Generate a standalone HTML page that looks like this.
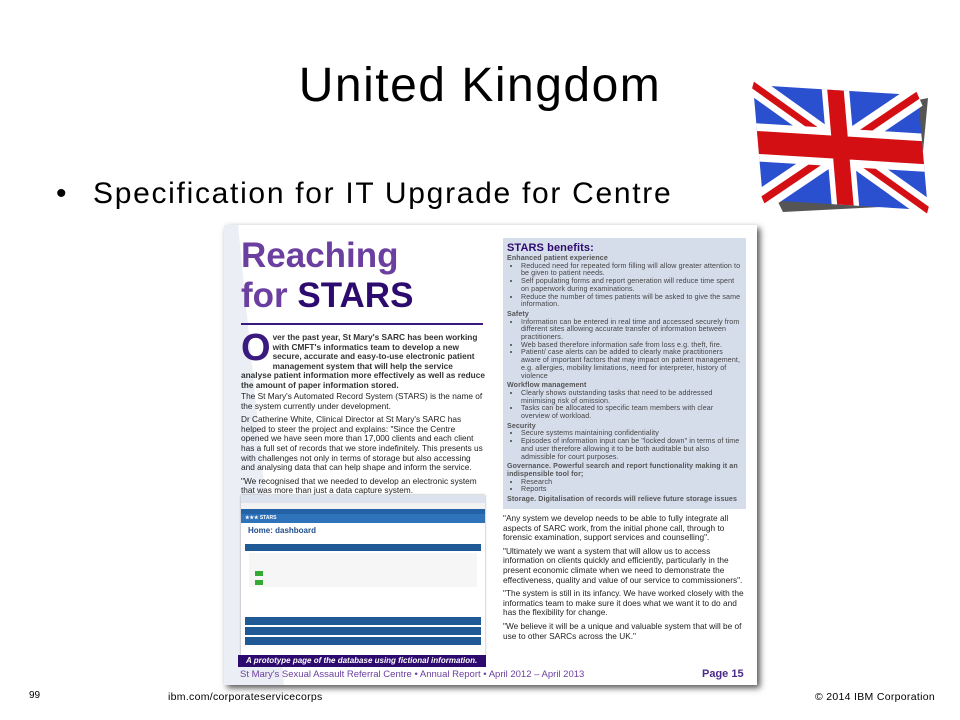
<!DOCTYPE html>
<html><head><meta charset="utf-8"><style>
body{margin:0;width:960px;height:720px;background:#fff;position:relative;overflow:hidden;font-family:"Liberation Sans",sans-serif}
.a{position:absolute}
.t{font-size:8.3px;line-height:9.6px;color:#333;font-weight:bold}
.r{font-size:7.1px;line-height:7.7px;color:#444;letter-spacing:0.1px}
.r ul{margin:0;padding-left:14px}
.r b{color:#555}
</style></head><body>
<div class="a" style="left:0;top:58px;width:960px;text-align:center;font-size:48px;letter-spacing:1.5px;color:#000">United Kingdom</div>
<div class="a" style="left:56px;top:177px;font-size:30px;color:#000">•</div>
<div class="a" style="left:93px;top:177px;font-size:30px;color:#000;letter-spacing:1.7px">Specification for IT Upgrade for Centre</div>

<svg class="a" style="left:0;top:0" width="960" height="230">
<polygon points="918,100 928,98 918,205 783,212 778,202" fill="#555"/>
<g transform="matrix(2.75,0.17,0.33,3.83,753,85)">
<rect width="60" height="30" fill="#2a4fcf"/>
<path d="M0,0L60,30M60,0L0,30" stroke="#fff" stroke-width="6"/>
<path d="M0,0L60,30M60,0L0,30" stroke="#d40f14" stroke-width="2"/>
<path d="M30,0V30M0,15H60" stroke="#fff" stroke-width="10"/>
<path d="M30,0V30M0,15H60" stroke="#d40f14" stroke-width="6"/>
</g>
</svg>

<div class="a" style="left:224px;top:225px;width:533px;height:460px;background:#fff;box-shadow:3px 3px 6px #555"></div>
<svg class="a" style="left:224px;top:225px" width="60" height="460"><polygon points="0,0 14,0 60,460 0,460" fill="#eceef6"/></svg>
<div class="a" style="left:241px;top:236px;font-size:35px;line-height:40px;font-weight:bold;color:#6b3fa0">Reaching<br>for <span style="color:#2d0a6e">STARS</span></div>
<div class="a" style="left:241px;top:323px;width:242px;height:2px;background:#3b1a80"></div>
<div class="a t" style="left:241px;top:333px;width:244px"><span style="float:left;font-size:38px;line-height:30px;color:#3b1a80;margin-right:2px">O</span>ver the past year, St Mary's SARC has been working with CMFT's informatics team to develop a new secure, accurate and easy-to-use electronic patient management system that will help the service analyse patient information more effectively as well as reduce the amount of paper information stored.</div>
<div class="a t" style="left:241px;top:392px;width:244px;font-weight:normal;color:#222">The St Mary's Automated Record System (STARS) is the name of the system currently under development.<div style="height:4px"></div>Dr Catherine White, Clinical Director at St Mary's SARC has helped to steer the project and explains: "Since the Centre opened we have seen more than 17,000 clients and each client has a full set of records that we store indefinitely. This presents us with challenges not only in terms of storage but also accessing and analysing data that can help shape and inform the service.<div style="height:4px"></div>"We recognised that we needed to develop an electronic system that was more than just a data capture system.</div>

<div class="a" style="left:241px;top:495px;width:244px;height:160px;background:#fff;box-shadow:0 0 2px #999">
<div style="height:8px;background:#dde3ee"></div>
<div style="height:6px;background:#f2f2f2"></div>
<div style="height:5px;background:#2462a8"></div>
<div style="height:9px;background:#2f73bb;color:#fff;font-size:5px;font-weight:bold;line-height:9px;padding-left:4px">★★★ STARS</div>
<div style="font-size:8px;font-weight:bold;color:#1f4e8c;padding:3px 7px">Home: dashboard</div>
<div style="margin:6px 4px 0;height:7px;background:#1f5a96"></div>
<div style="margin:2px 8px;height:34px;background:#f6f6f6;position:relative"><div style="position:absolute;left:6px;top:18px;width:8px;height:5px;background:#3a3"></div><div style="position:absolute;left:6px;top:27px;width:8px;height:5px;background:#3a3"></div></div>
<div style="margin:30px 4px 0;height:8px;background:#1f5a96"></div>
<div style="margin:2px 4px 0;height:8px;background:#1f5a96"></div>
<div style="margin:2px 4px 0;height:8px;background:#1f5a96"></div>
</div>
<div class="a" style="left:238px;top:655px;width:248px;height:12px;background:#2d0a6e;color:#fff;font-size:8px;font-weight:bold;font-style:italic;line-height:12px;padding-left:8px;box-sizing:border-box">A prototype page of the database using fictional information.</div>
<div class="a" style="left:240px;top:669px;font-size:9.5px;color:#6b3fa0">St Mary's Sexual Assault Referral Centre • Annual Report • April 2012 – April 2013</div>
<div class="a" style="left:702px;top:668px;font-size:11px;font-weight:bold;color:#4b2a8a">Page 15</div>

<div class="a r" style="left:503px;top:238px;width:236px;height:268px;background:#d5dcea;padding:3px 3px 0 4px;overflow:hidden">
<div style="font-size:11px;font-weight:bold;color:#2d0a6e;line-height:14px">STARS benefits:</div>
<b>Enhanced patient experience</b><ul><li>Reduced need for repeated form filling will allow greater attention to be given to patient needs.</li><li>Self populating forms and report generation will reduce time spent on paperwork during examinations.</li><li>Reduce the number of times patients will be asked to give the same information.</li></ul>
<div style="height:2px"></div><b>Safety</b><ul><li>Information can be entered in real time and accessed securely from different sites allowing accurate transfer of information between practitioners.</li><li>Web based therefore information safe from loss e.g. theft, fire.</li><li>Patient/ case alerts can be added to clearly make practitioners aware of important factors that may impact on patient management, e.g. allergies, mobility limitations, need for interpreter, history of violence</li></ul>
<div style="height:2px"></div><b>Workflow management</b><ul><li>Clearly shows outstanding tasks that need to be addressed minimising risk of omission.</li><li>Tasks can be allocated to specific team members with clear overview of workload.</li></ul>
<div style="height:2px"></div><b>Security</b><ul><li>Secure systems maintaining confidentiality</li><li>Episodes of information input can be "locked down" in terms of time and user therefore allowing it to be both auditable but also admissible for court purposes.</li></ul>
<div style="height:2px"></div><b>Governance. Powerful search and report functionality making it an indispensible tool for;</b><ul><li>Research</li><li>Reports</li></ul>
<div style="height:2px"></div><b>Storage. Digitalisation of records will relieve future storage issues</b>
</div>
<div class="a t" style="left:503px;top:514px;width:244px;font-weight:normal;color:#222">"Any system we develop needs to be able to fully integrate all aspects of SARC work, from the initial phone call, through to forensic examination, support services and counselling".<div style="height:4px"></div>"Ultimately we want a system that will allow us to access information on clients quickly and efficiently, particularly in the present economic climate when we need to demonstrate the effectiveness, quality and value of our service to commissioners".<div style="height:4px"></div>"The system is still in its infancy. We have worked closely with the informatics team to make sure it does what we want it to do and has the flexibility for change.<div style="height:4px"></div>"We believe it will be a unique and valuable system that will be of use to other SARCs across the UK."</div>

<div class="a" style="left:29px;top:690px;font-size:10px">99</div>
<div class="a" style="left:168px;top:691px;font-size:10.5px;letter-spacing:0.3px">ibm.com/corporateservicecorps</div>
<div class="a" style="left:815px;top:691px;font-size:10.5px;letter-spacing:0.3px">© 2014 IBM Corporation</div>
</body></html>
